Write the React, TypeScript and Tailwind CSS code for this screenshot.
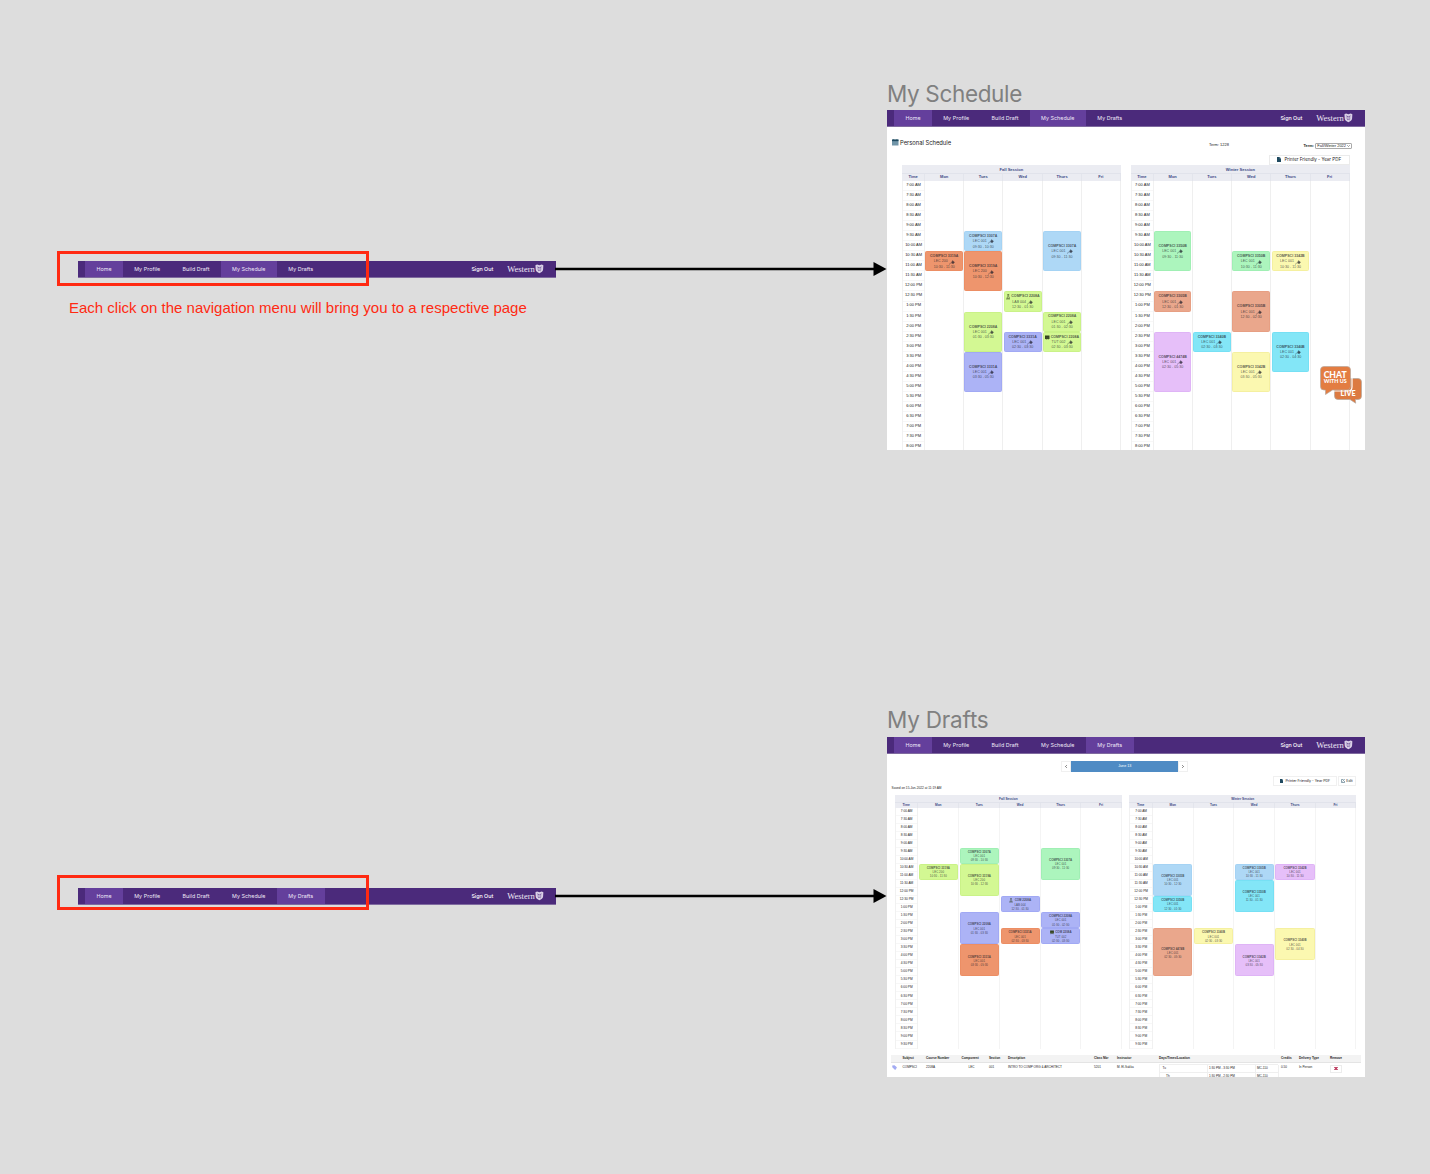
import React from "react";

type Ev = {
  day: number;
  start: number;
  span: number;
  title: string;
  section: string;
  time: string;
  tone: string;
  icon?: "lab" | "tut";
};

const BLUE = "bg-[#aed8f6] border-[#a5d3f4]";
const ORANGE = "bg-[#ee956d] border-[#ec8e64]";
const LIME = "bg-[#d3f893] border-[#caf288]";
const VIOLET = "bg-[#acb3f6] border-[#a1a9f4]";
const GREEN = "bg-[#acf5bd] border-[#a0efb4]";
const SALMON = "bg-[#eaa78c] border-[#e79f83]";
const CYAN = "bg-[#83e6f7] border-[#76e0f4]";
const YELLOW = "bg-[#fbf8b0] border-[#f5f0a0]";
const PINK = "bg-[#e6bff9] border-[#dfb4f6]";

const DAYS = ["Mon", "Tues", "Wed", "Thurs", "Fri"];

const ev = (
  day: number,
  start: number,
  span: number,
  title: string,
  section: string,
  time: string,
  tone: string,
  icon?: "lab" | "tut",
): Ev => ({ day, start, span, title, section, time, tone, icon });

const scheduleFall: Ev[] = [
  ev(0, 7, 2, "COMPSCI 3319A", "LEC 200", "10:30 - 11:30", ORANGE),
  ev(1, 5, 2, "COMPSCI 3307A", "LEC 001", "09:30 - 10:30", BLUE),
  ev(1, 7, 4, "COMPSCI 3319A", "LEC 200", "10:30 - 12:30", ORANGE),
  ev(1, 13, 4, "COMPSCI 2208A", "LEC 001", "01:30 - 03:30", LIME),
  ev(1, 17, 4, "COMPSCI 3331A", "LEC 001", "03:30 - 05:30", VIOLET),
  ev(2, 11, 2, "COMPSCI 2208A", "LAB 004", "12:30 - 01:30", LIME, "lab"),
  ev(2, 15, 2, "COMPSCI 3331A", "LEC 001", "02:30 - 03:30", VIOLET),
  ev(3, 5, 4, "COMPSCI 3307A", "LEC 001", "09:30 - 11:30", BLUE),
  ev(3, 13, 2, "COMPSCI 2208A", "LEC 001", "01:30 - 02:30", LIME),
  ev(3, 15, 2, "COMPSCI 2208A", "TUT 002", "02:30 - 03:30", LIME, "tut"),
];

const scheduleWinter: Ev[] = [
  ev(0, 5, 4, "COMPSCI 3350B", "LEC 001", "09:30 - 11:30", GREEN),
  ev(0, 11, 2, "COMPSCI 3305B", "LEC 001", "12:30 - 01:30", SALMON),
  ev(0, 15, 6, "COMPSCI 4474B", "LEC 001", "02:30 - 05:30", PINK),
  ev(1, 15, 2, "COMPSCI 3340B", "LEC 001", "02:30 - 03:30", CYAN),
  ev(2, 7, 2, "COMPSCI 3350B", "LEC 001", "10:30 - 11:30", GREEN),
  ev(2, 11, 4, "COMPSCI 3305B", "LEC 001", "12:30 - 02:30", SALMON),
  ev(2, 17, 4, "COMPSCI 3342B", "LEC 001", "03:30 - 05:30", YELLOW),
  ev(3, 7, 2, "COMPSCI 3342B", "LEC 001", "10:30 - 11:30", YELLOW),
  ev(3, 15, 4, "COMPSCI 3340B", "LEC 001", "02:30 - 04:30", CYAN),
];

const draftFall: Ev[] = [
  ev(0, 7, 2, "COMPSCI 3319A", "LEC 200", "10:30 - 11:30", LIME),
  ev(1, 5, 2, "COMPSCI 3307A", "LEC 001", "09:30 - 10:30", GREEN),
  ev(1, 7, 4, "COMPSCI 3319A", "LEC 200", "10:30 - 12:30", LIME),
  ev(1, 13, 4, "COMPSCI 2208A", "LEC 001", "01:30 - 03:30", VIOLET),
  ev(1, 17, 4, "COMPSCI 3331A", "LEC 001", "03:30 - 05:30", ORANGE),
  ev(2, 11, 2, "COM 2208A", "LAB 004", "12:30 - 01:30", VIOLET, "lab"),
  ev(2, 15, 2, "COMPSCI 3331A", "LEC 001", "02:30 - 03:30", ORANGE),
  ev(3, 5, 4, "COMPSCI 3307A", "LEC 001", "09:30 - 11:30", GREEN),
  ev(3, 13, 2, "COMPSCI 2208A", "LEC 001", "01:30 - 02:30", VIOLET),
  ev(3, 15, 2, "COM 2208A", "TUT 002", "02:30 - 03:30", VIOLET, "tut"),
];

const draftWinter: Ev[] = [
  ev(0, 7, 4, "COMPSCI 3305B", "LEC 001", "10:30 - 12:30", BLUE),
  ev(0, 11, 2, "COMPSCI 3350B", "LEC 001", "12:30 - 01:30", CYAN),
  ev(0, 15, 6, "COMPSCI 4474B", "LEC 001", "02:30 - 05:30", SALMON),
  ev(1, 15, 2, "COMPSCI 3340B", "LEC 001", "02:30 - 03:30", YELLOW),
  ev(2, 7, 2, "COMPSCI 3305B", "LEC 001", "10:30 - 11:30", BLUE),
  ev(2, 9, 4, "COMPSCI 3350B", "LEC 001", "11:30 - 01:30", CYAN),
  ev(2, 17, 4, "COMPSCI 3342B", "LEC 001", "03:30 - 05:30", PINK),
  ev(3, 7, 2, "COMPSCI 3342B", "LEC 001", "10:30 - 11:30", PINK),
  ev(3, 15, 4, "COMPSCI 3340B", "LEC 001", "02:30 - 04:30", YELLOW),
];

const timeLabel = (i: number) => {
  const h = 7 + Math.floor(i / 2);
  return `${((h - 1) % 12) + 1}:${i % 2 ? "30" : "00"} ${h < 12 ? "AM" : "PM"}`;
};

function Shield() {
  return (
    <svg viewBox="0 0 16 18" className="h-[9.500px] w-[8.800px]" fill="none">
      <path d="M.500 2.500L3.500 1 8 2.500 12.500 1l3 1.500-.500 8c0 3.500-3.500 5.500-7 7-3.500-1.500-7-3.500-7-7z" fill="#d9cfe6" />
      <path d="M4 5.500l4 1.800 4-1.800M4.500 9.500h2.300M9.200 9.500h2.300M5.500 13c1.500-1.600 3.500-1.600 5 0" stroke="#4b2a7b" strokeWidth="1.300" />
    </svg>
  );
}

const NAV = [
  { label: "Home", w: "w-[38px]" },
  { label: "My Profile", w: "w-[48.500px]" },
  { label: "Build Draft", w: "w-[49px]" },
  { label: "My Schedule", w: "w-[56.500px]" },
  { label: "My Drafts", w: "w-[47.500px]" },
];

function NavBar({ active }: { active: string }) {
  return (
    <nav className="flex h-[16.500px] w-full shrink-0 items-stretch border-b border-[#7f6a9f] bg-[#4b2a7b] pl-[7px] font-['Inter'] text-[5.350px] tracking-[0.050px] text-[#f0eaf8]">
      {NAV.map((n) => (
        <div
          key={n.label}
          className={`flex items-center justify-center ${n.w} ${n.label === "Home" || n.label === active ? "bg-[#643f9c]" : ""}`}
        >
          {n.label}
        </div>
      ))}
      <div className="ml-auto flex items-center pr-[12px]">
        <span className="mr-[14px] font-medium tracking-normal text-white">Sign Out</span>
        <span className="font-['Liberation_Serif'] text-[8.450px] leading-none tracking-normal text-[#efe9f6]">Western</span>
        <Shield />
      </div>
    </nav>
  );
}

function PinIcon() {
  return (
    <svg viewBox="0 0 12 10" className="ml-[1px] h-[5px] w-[6px]">
      <path d="M0 9.500L4 5" stroke="currentColor" strokeWidth="1" />
      <path d="M7.500 0l1.300 2.600L12 4.500 9.300 6v2.500L7.500 7 5.500 8V5.500L4 4.200l2.300-1.400z" fill="currentColor" />
    </svg>
  );
}

function FlaskIcon() {
  return (
    <svg viewBox="0 0 10 12" className="h-full w-full" fill="none" stroke="#33421f" strokeWidth="1.100">
      <path d="M3 1h4M4 1v4L2 9.500h6L6 5V1M0 11h10" />
    </svg>
  );
}

function BoardIcon() {
  return (
    <svg viewBox="0 0 10 12" className="h-full w-full">
      <path d="M0 1h10v8H0z" fill="#33421f" />
      <path d="M2 11.500l1.500-2.500M8 11.500L6.500 9" stroke="#33421f" />
      <path d="M1.500 6.500h7" stroke="#8a9a6a" strokeWidth=".6" />
    </svg>
  );
}

function EventCard({ e, small }: { e: Ev; small: boolean }) {
  return (
    <div
      className={`flex min-h-0 flex-col items-center justify-center overflow-hidden whitespace-nowrap rounded-[1.500px] border text-[#1d1d2a]/75 ${e.tone} ${
        small
          ? "mx-[0.300px] pt-[1px] text-[2.950px] leading-[4.100px]"
          : "mx-[0.300px] pt-[1.500px] text-[3.600px] leading-[5.300px]"
      }`}
      style={{ gridRow: `${e.start + 1} / span ${e.span}` }}
    >
      <div className="flex items-center font-bold">
        {e.icon && (
          <span className={small ? "mr-[1.500px] h-[4.500px] w-[4px]" : "mr-[1px] h-[5.500px] w-[4.500px]"}>
            {e.icon === "lab" ? <FlaskIcon /> : <BoardIcon />}
          </span>
        )}
        {e.title}
      </div>
      <div className="flex items-center">
        {e.section}
        {!small && <PinIcon />}
      </div>
      <div>{e.time}</div>
    </div>
  );
}

function Timetable({ title, events, small, cols }: { title: string; events: Ev[]; small: boolean; cols: string }) {
  const rows = small ? 30 : 27;
  const rowH = small ? "h-[8.035px]" : "h-[10.070px]";
  return (
    <div className="flex flex-col">
      <div
        className={`flex items-center justify-center bg-[#ebecf2] font-bold text-[#3c4a86] ${
          small ? "h-[6.500px] pt-[1.500px] text-[3.200px]" : "h-[7.500px] pt-[1px] text-[4.050px]"
        }`}
      >
        {title}
      </div>
      <div
        className={`grid border-t border-[#e1e3eb] bg-[#ebecf2] font-bold text-[#3c4a86] ${cols} ${
          small ? "h-[6.100px] text-[3.200px]" : "h-[8px] text-[4px]"
        }`}
      >
        {["Time", ...DAYS].map((d) => (
          <div
            key={d}
            className={`flex items-center justify-center border-r border-[#e3e5ec] ${small ? "pt-[0.500px]" : "pb-[0.800px]"}`}
          >
            {d}
          </div>
        ))}
      </div>
      <div className={`grid ${cols}`}>
        <div className={`border-x border-[#f1f1f1] text-[#222] ${small ? "text-[3.200px]" : "text-[4px]"}`}>
          {Array.from({ length: rows }, (_, i) => (
            <div
              key={i}
              className={`flex justify-center whitespace-nowrap border-b border-[#f7f7f7] ${rowH} ${
                small ? "pt-[1.200px] leading-[5.600px]" : "pt-[0.900px] leading-[6.800px]"
              }`}
            >
              {timeLabel(i)}
            </div>
          ))}
        </div>
        {DAYS.map((d, i) => (
          <div
            key={d}
            className={`grid min-w-0 border-r ${
              small
                ? "grid-rows-[repeat(30,8.035px)] border-[#f4f4f4]"
                : "grid-rows-[repeat(27,10.070px)] border-[#efefef]"
            }`}
          >
            {events
              .filter((e) => e.day === i)
              .map((e) => (
                <EventCard key={e.start} e={e} small={small} />
              ))}
          </div>
        ))}
      </div>
    </div>
  );
}

function FileIcon({ small }: { small?: boolean }) {
  return (
    <svg viewBox="0 0 8 10" className={small ? "h-[4px] w-[3.200px]" : "h-[5px] w-[4px]"}>
      <path d="M0 0h5l3 3v7H0z" fill="#1f4a60" />
      <path d="M5 0v3h3" fill="#7e9aa8" />
    </svg>
  );
}

function ChatBadge() {
  return (
    <svg viewBox="0 0 42 38" className="h-[38px] w-[42px]">
      <path
        d="M17 12.500h21a3.500 3.500 0 0 1 3.500 3.500v14a3.500 3.500 0 0 1-3.500 3.500h-2.700l.4 3.700-5.700-3.700H18a3.500 3.500 0 0 1-3.500-3.500V16z"
        fill="#dc7a41"
        stroke="#b3a79f"
        strokeWidth=".7"
      />
      <path d="M14 25h14c2.500 0 4-1.500 4-4V12" fill="none" stroke="#fff" strokeWidth="1.200" />
      <path
        d="M4 .500h23a3.500 3.500 0 0 1 3.500 3.500v16.500a3.500 3.500 0 0 1-3.500 3.500H12.500l-7 4.500v-4.500H4A3.500 3.500 0 0 1 .500 20.500V4A3.500 3.500 0 0 1 4 .500z"
        fill="#e37d42"
        stroke="#b8a79c"
        strokeWidth=".7"
      />
      <text x="15.200" y="11.500" textAnchor="middle" fill="#fff" fontFamily="Lato" fontWeight="900" fontSize="8.800" textLength="23" lengthAdjust="spacingAndGlyphs">CHAT</text>
      <text x="15.300" y="17" textAnchor="middle" fill="#fff" fontFamily="Lato" fontWeight="900" fontSize="5.200" textLength="23" lengthAdjust="spacingAndGlyphs">WITH US</text>
      <text x="28" y="30.200" textAnchor="middle" fill="#fff" fontFamily="Lato" fontWeight="900" fontSize="6.600" textLength="15" lengthAdjust="spacingAndGlyphs">LIVE</text>
    </svg>
  );
}

function SchedulePage() {
  return (
    <div className="relative flex h-[339.500px] w-[477.500px] flex-col overflow-hidden bg-white">
      <NavBar active="My Schedule" />
      <div className="mt-[10.500px] flex h-[11px] shrink-0 items-center pl-[5px] text-[6.050px] text-[#222]">
        <svg viewBox="0 0 12 12" className="mr-[1.500px] h-[6.500px] w-[6.500px]">
          <path d="M0 1h12v11H0z" fill="#7195a8" />
          <path d="M0 1h12v3H0z" fill="#1f4a60" />
          <path d="M3 0v2M9 0v2" stroke="#1f4a60" />
        </svg>
        <span className="w-[309px] pt-[1.500px] font-['Inter'] text-[5.800px]">Personal Schedule</span>
        <span className="mt-[5px] w-[94.500px] text-[4px]">Term: 1228</span>
        <span className="mt-[6px] w-[11.800px] text-[3.900px] font-bold">Term:</span>
        <span className="mt-[6px] flex h-[6px] w-[37px] items-center justify-between whitespace-nowrap rounded-[1px] border border-[#aaa] px-[1px] text-[3.950px]">
          Fall/Winter 2022
          <svg viewBox="0 0 6 4" className="h-[2px] w-[3px]" fill="none" stroke="#333">
            <path d="M.500.500L3 3 5.500.500" />
          </svg>
        </span>
      </div>
      <div className="ml-[382px] mt-[6.500px] flex h-[10.800px] w-[80.500px] shrink-0 items-center justify-center gap-[3px] border border-[#ebebeb] whitespace-nowrap font-['Inter'] text-[4.500px] text-[#222]">
        <FileIcon />
        Printer Friendly - Year PDF
      </div>
      <div className="ml-[15px] flex gap-[10.500px]">
        <div className="w-[218.700px] shrink-0">
          <Timetable title="Fall Session" events={scheduleFall} small={false} cols="grid-cols-[23.200px_39px_39.200px_39.600px_39.200px_38.500px]" />
        </div>
        <div className="w-[218.500px] shrink-0">
          <Timetable title="Winter Session" events={scheduleWinter} small={false} cols="grid-cols-[22.400px_39.200px_39.200px_39.500px_39.200px_39px]" />
        </div>
      </div>
      <div className="absolute left-[433px] top-[256px]">
        <ChatBadge />
      </div>
    </div>
  );
}

const LIST_COLS =
  "grid-cols-[11.500px_23.500px_35.500px_27.500px_19px_86px_23px_42px_122px_18px_31px_30px]";

function Chevron({ d }: { d: string }) {
  return (
    <svg viewBox="0 0 4 6" className="h-[3px] w-[2px]" fill="none" stroke="#333" strokeWidth="1.400">
      <path d={d} />
    </svg>
  );
}

function DraftsPage() {
  return (
    <div className="flex h-[339.500px] w-[477.500px] flex-col overflow-hidden bg-white text-[#222]">
      <NavBar active="My Drafts" />
      <div className="mt-[7.500px] flex h-[10.500px] shrink-0 justify-center pr-[2px]">
        <div className="flex w-[10px] items-center justify-center border border-[#f0f0f0]">
          <Chevron d="M3.500.500L1 3l2.500 2.500" />
        </div>
        <div className="flex w-[107px] items-center justify-center bg-[#4f8bc4] pt-[1px] text-[3.700px] text-white">June 13</div>
        <div className="flex w-[10px] items-center justify-center border border-[#f0f0f0]">
          <Chevron d="M.500.500L3 3 .500 5.500" />
        </div>
      </div>
      <div className="mt-[4.500px] flex h-[9.500px] shrink-0 justify-end gap-[1px] whitespace-nowrap pr-[8.500px] font-['Inter'] text-[3.550px]">
        <div className="flex w-[64px] items-center justify-center gap-[2.500px] border border-[#f0f0f0] pt-[1px]">
          <FileIcon small />
          Printer Friendly - Year PDF
        </div>
        <div className="flex w-[18px] items-center justify-center gap-[1px] border border-[#f0f0f0] pt-[1px]">
          <svg viewBox="0 0 8 8" className="h-[4px] w-[4px]" fill="none" stroke="#1f4a60">
            <path d="M5 1H1v6h6V4M3 5l4.500-4.500" />
          </svg>
          Edit
        </div>
      </div>
      <div className="h-[9.500px] shrink-0 pl-[4.500px] text-[3.200px] leading-[4px]">Saved on 15-Jun-2022 at 11:19 AM</div>
      <div className="ml-[8px] flex shrink-0 gap-[7.800px]">
        <div className="w-[226.700px] shrink-0">
          <Timetable title="Fall Session" events={draftFall} small cols="grid-cols-[23.300px_41px_41px_40.600px_40.500px_40.300px]" />
        </div>
        <div className="w-[226.500px] shrink-0">
          <Timetable title="Winter Session" events={draftWinter} small cols="grid-cols-[23.300px_41px_40.500px_40.800px_40.800px_40.100px]" />
        </div>
      </div>
      <div className="mx-[4px] mt-[6px] whitespace-nowrap text-[3.100px]">
        <div className={`grid h-[8px] items-center border-b border-[#e4e4e4] bg-[#f3f3f3] pt-[1.500px] font-bold ${LIST_COLS}`}>
          <span />
          <span>Subject</span>
          <span>Course Number</span>
          <span>Component</span>
          <span>Section</span>
          <span>Description</span>
          <span>Class Nbr</span>
          <span>Instructor</span>
          <span>Days/Times/Location</span>
          <span>Credits</span>
          <span>Delivery Type</span>
          <span>Remove</span>
        </div>
        <div className={`grid leading-[8px] ${LIST_COLS}`}>
          <svg viewBox="0 0 8 8" className="ml-[1px] mt-[2px] h-[5px] w-[5px]">
            <path d="M1 1h3.500l3 3L5 7.500 1 3.500z" fill="#a5adf5" stroke="#7f88e8" strokeWidth=".6" />
          </svg>
          <span>COMPSCI</span>
          <span>2208A</span>
          <span className="pl-[7px]">LEC</span>
          <span>001</span>
          <span>INTRO TO COMP ORG &amp; ARCHITECT</span>
          <span>5201</span>
          <span>M. El-Sakka</span>
          <div className="mt-[1px] grid w-[119px] grid-cols-[47.500px_48px_23.500px] grid-rows-[8px_8px] border-l border-t border-[#efefef] leading-[7px]">
            {["Tu", "1:30 PM - 3:30 PM", "MC-110", "Th", "1:30 PM - 2:30 PM", "MC-110"].map((t, i) => (
              <span
                key={i}
                className={`border-b border-r border-[#efefef] ${i === 3 ? "pl-[6px]" : i === 0 ? "pl-[2.500px]" : "pl-[1.500px]"}`}
              >
                {t}
              </span>
            ))}
          </div>
          <span>0.50</span>
          <span>In Person</span>
          <span className="mt-[2px] flex h-[8px] w-[12px] items-center justify-center border border-[#ececec]">
            <svg viewBox="0 0 8 6" className="h-[3px] w-[4px]">
              <path d="M1 0l6 6M7 0L1 6" stroke="#b0153f" strokeWidth="2.200" />
            </svg>
          </span>
        </div>
      </div>
    </div>
  );
}

function Arrow() {
  return (
    <svg viewBox="0 0 332 16" className="h-[16px] w-[332px]">
      <path d="M0 8h320" stroke="#000" strokeWidth="2.500" />
      <path d="M318.500 1l13 7-13 7z" />
    </svg>
  );
}

export default function App() {
  return (
    <main className="relative h-[1174px] w-[1430px] overflow-hidden bg-[#dddddd] font-['Liberation_Sans',sans-serif]">
      <div className="absolute left-[78px] top-[261px] w-[477.500px]">
        <NavBar active="My Schedule" />
      </div>
      <div className="absolute left-[56.500px] top-[250.500px] h-[35px] w-[312.500px] border-[3px] border-[#ff2a12]" />
      <p className="absolute left-[69px] top-[299px] whitespace-nowrap text-[15px] leading-[18px] text-[#ff2a12]">
        Each click on the navigation menu will bring you to a respective page
      </p>
      <div className="absolute left-[555px] top-[261px]">
        <Arrow />
      </div>
      <h2 className="absolute left-[887px] top-[80px] whitespace-nowrap font-['Inter'] text-[22.500px] leading-[28px] tracking-[-0.350px] text-[#808080]">My Schedule</h2>
      <div className="absolute left-[887px] top-[110px]">
        <SchedulePage />
      </div>

      <div className="absolute left-[78px] top-[888px] w-[477.500px]">
        <NavBar active="My Drafts" />
      </div>
      <div className="absolute left-[56.500px] top-[874.500px] h-[35px] w-[312.500px] border-[3px] border-[#ff2a12]" />
      <div className="absolute left-[555px] top-[888px]">
        <Arrow />
      </div>
      <h2 className="absolute left-[887px] top-[706px] whitespace-nowrap font-['Inter'] text-[22.500px] leading-[28px] tracking-[-0.200px] text-[#808080]">My Drafts</h2>
      <div className="absolute left-[887px] top-[737px]">
        <DraftsPage />
      </div>
    </main>
  );
}
